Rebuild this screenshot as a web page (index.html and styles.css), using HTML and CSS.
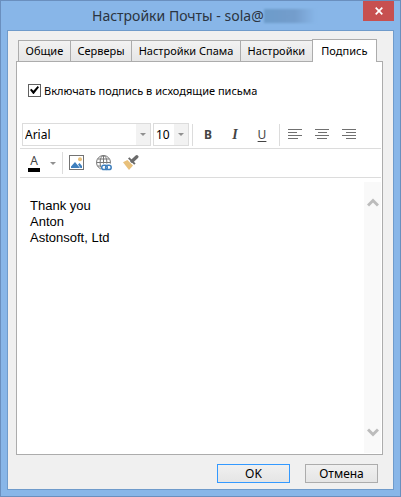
FILE: index.html
```html
<!DOCTYPE html>
<html lang="ru">
    <head>
        <meta charset="utf-8">
        <title>Настройки Почты</title>
        <link rel="stylesheet" href="styles.css">
    </head>
    <body>
        <div class="window">
            <header class="titlebar">
                <h1 class="title">Настройки Почты - sola@<span class="hidden-name"></span></h1>
                <button class="close" aria-label="Закрыть">
                    <svg width="8" height="8" viewBox="0 0 8 8"><path d="M0.7 0.7L7.3 7.3M7.3 0.7L0.7 7.3" stroke="#fff" stroke-width="1.7"/></svg>
                </button>
            </header>
            <main class="client">
                <nav class="tabs">
                    <button class="tab">Общие</button>
                    <button class="tab">Серверы</button>
                    <button class="tab">Настройки Спама</button>
                    <button class="tab">Настройки</button>
                    <button class="tab active">Подпись</button>
                </nav>
                <section class="panel">
                    <div class="option">
                        <input type="checkbox" id="include" checked>
                        <label for="include">Включать подпись в исходящие письма</label>
                    </div>
                    <div class="toolbar">
                        <div class="combo combo-font">
                            <select aria-label="Шрифт"><option>Arial</option></select>
                        </div>
                        <div class="combo combo-size">
                            <select aria-label="Размер"><option>10</option></select>
                        </div>
                        <div class="separator"></div>
                        <div class="group">
                            <button class="tool bold" aria-label="Полужирный">B</button>
                            <button class="tool italic" aria-label="Курсив">I</button>
                            <button class="tool underline" aria-label="Подчеркнутый">U</button>
                        </div>
                        <div class="separator"></div>
                        <div class="group">
                            <button class="tool" aria-label="По левому краю">
                                <svg width="14" height="11" viewBox="0 0 14 11"><path d="M0 .5h14M0 3.5h9M0 6.5h14M0 9.5h10" stroke="#707070"/></svg>
                            </button>
                            <button class="tool" aria-label="По центру">
                                <svg width="14" height="11" viewBox="0 0 14 11"><path d="M0 .5h14M3 3.5h9M0 6.5h14M2 9.5h10" stroke="#707070"/></svg>
                            </button>
                            <button class="tool" aria-label="По правому краю">
                                <svg width="14" height="11" viewBox="0 0 14 11"><path d="M0 .5h14M4 3.5h10M0 6.5h14M4 9.5h10" stroke="#707070"/></svg>
                            </button>
                        </div>
                    </div>
                    <div class="toolbar toolbar-insert">
                        <button class="color" aria-label="Цвет текста"><span class="color-letter">A</span></button>
                        <button class="arrow" aria-label="Выбрать цвет"></button>
                        <div class="separator"></div>
                        <div class="group inserts">
                            <button class="tool" aria-label="Вставить рисунок">
                                <svg width="16" height="16" viewBox="0 0 16 16">
                                    <rect x=".5" y=".5" width="14" height="14" fill="#fff" stroke="#737373"/>
                                    <circle cx="11" cy="4.2" r="2" fill="#e8c07a"/>
                                    <path d="M2 13V11.5L6 7l5 6zM9 9.5l1.5-1.5L13 11v2h-1.5z" fill="#3f7fbd"/>
                                </svg>
                            </button>
                            <button class="tool" aria-label="Вставить ссылку">
                                <svg width="16" height="16" viewBox="0 0 16 16" fill="none">
                                    <g stroke="#777">
                                        <circle cx="7.5" cy="7.5" r="7"/>
                                        <ellipse cx="7.5" cy="7.5" rx="3.4" ry="7"/>
                                        <path d="M7.5 .5v14M.5 7.5h14M1.7 4h11.6M1.7 11h11.6"/>
                                    </g>
                                    <rect x="5" y="8.6" width="11" height="7.4" fill="#fff"/>
                                    <rect x="5.7" y="10.2" width="5.6" height="4.4" rx="2.2" stroke="#3f7fbd" stroke-width="1.5"/>
                                    <rect x="9.6" y="10.2" width="5.6" height="4.4" rx="2.2" stroke="#3f7fbd" stroke-width="1.5"/>
                                </svg>
                            </button>
                            <button class="tool" aria-label="Формат по образцу">
                                <svg width="16" height="16" viewBox="0 0 16 16">
                                    <path d="M0 7.2L4.4 5L10 10.6L6 15z" fill="#e8c07a"/>
                                    <path d="M5 3.6L6.4 2.2L12.6 8.4L11.2 9.8z" fill="#6b6b6b"/>
                                    <path d="M9 6.2L13.8 1.8" stroke="#6b6b6b" stroke-width="3.4" stroke-linecap="round"/>
                                </svg>
                            </button>
                        </div>
                    </div>
                    <div class="editor">
                        <textarea class="signature" aria-label="Подпись">Thank you
Anton
Astonsoft, Ltd</textarea>
                        <div class="scrollbar">
                            <button class="scroll" aria-label="Вверх">
                                <svg width="12" height="10" viewBox="0 0 12 10"><path d="M1 7.5L6 2.5L11 7.5" fill="none" stroke="#bcbcbc" stroke-width="3"/></svg>
                            </button>
                            <button class="scroll" aria-label="Вниз">
                                <svg width="12" height="10" viewBox="0 0 12 10"><path d="M1 2.5L6 7.5L11 2.5" fill="none" stroke="#bcbcbc" stroke-width="3"/></svg>
                            </button>
                        </div>
                    </div>
                </section>
                <footer class="actions">
                    <button class="action default">OK</button>
                    <button class="action">Отмена</button>
                </footer>
            </main>
        </div>
    </body>
</html>
```
FILE: styles.css
```css
*{
    box-sizing: border-box;
}
body{
    margin: 0;
    font-family: "Noto Sans", "Open Sans", sans-serif;
    font-size: 11px;
    color: black;
}
button{
    padding: 0;
    border: none;
    background: none;
    font: inherit;
    color: inherit;
}
svg{
    display: block;
}
.window{
    display: flex;
    flex-direction: column;
    min-height: 100vh;
    padding: 0 6px 6px;
    border: 1px solid #6a8fbe;
    background-color: #88b6e8;
}
.titlebar{
    display: flex;
    align-items: flex-start;
    height: 29px;
    padding-left: 85px;
}
.title{
    display: flex;
    flex: 1;
    align-items: center;
    margin: 0;
    font-size: 14px;
    font-weight: normal;
    line-height: 30px;
    white-space: nowrap;
    color: #2b3440;
}
.hidden-name{
    width: 52px;
    height: 14px;
    background: linear-gradient(to right, #6c9ccb, #749dcc 60%, #88b6e8);
    filter: blur(1px);
}
.close{
    display: flex;
    align-items: center;
    justify-content: center;
    width: 31px;
    height: 20px;
    background-color: #c75050;
}
.client{
    display: flex;
    flex: 1;
    flex-direction: column;
    padding: 8px 10px 6px 8px;
    border: 1px solid #6f9bcb;
    background-color: #f0f0f0;
}
/* tabs */
.tabs{
    display: flex;
    align-items: flex-end;
    padding: 0 6px 0 2px;
}
.tab{
    flex: auto;
    height: 21px;
    margin-right: -1px;
    padding: 0 5px;
    border: 1px solid #acacac;
    border-bottom: none;
    background: linear-gradient(#f2f2f2, #e6e6e6);
    line-height: 20px;
    white-space: nowrap;
}
.tab.active{
    z-index: 1;
    height: 23px;
    margin-bottom: -1px;
    margin-right: 0;
    padding: 0 7px;
    background: white;
}
.panel{
    display: flex;
    flex: 1;
    flex-direction: column;
    padding: 20px 1px 1px 3px;
    border: 1px solid #acacac;
    background-color: white;
}
.option{
    display: flex;
    align-items: center;
    gap: 3px;
    height: 16px;
    margin-bottom: 23px;
    padding-left: 8px;
    white-space: nowrap;
}
.option input{
    appearance: none;
    display: flex;
    align-items: center;
    justify-content: center;
    width: 13px;
    height: 13px;
    margin: 0;
    border: 1px solid #606060;
}
.option input:checked::before{
    content: "";
    width: 9px;
    height: 8px;
    background-color: black;
    clip-path: polygon(0 50%, 15% 35%, 38% 60%, 85% 0, 100% 15%, 42% 100%, 35% 100%);
}
/* toolbars */
.toolbar{
    display: flex;
    align-items: center;
    gap: 2px;
    height: 28px;
    padding: 0 2px;
    border-bottom: 1px solid #dcdcdc;
}
.combo{
    position: relative;
    height: 23px;
    border: 1px solid #dcdcdc;
}
.combo-font{
    width: 129px;
}
.combo-size{
    width: 36px;
}
.combo select{
    appearance: none;
    width: 100%;
    height: 100%;
    padding: 0 0 0 2px;
    border: none;
    background: linear-gradient(#f2f2f2, #f2f2f2) right / 14px 100% no-repeat white;
    font: inherit;
    font-size: 12px;
    color: black;
}
/* drop-down arrow over the select */
.combo::after{
    content: "";
    position: absolute;
    top: 9px;
    right: 4px;
    border: 3px solid transparent;
    border-top-color: #909090;
    border-bottom: none;
    pointer-events: none;
}
.separator{
    width: 1px;
    height: 22px;
    margin: 0 1px;
    background-color: #dcdcdc;
}
.group{
    display: flex;
    gap: 5px;
    padding: 0 3px 0 1px;
}
.tool{
    display: flex;
    align-items: center;
    justify-content: center;
    width: 22px;
    height: 22px;
    font-size: 12px;
    color: #444;
}
.bold{
    font-weight: bold;
}
.italic{
    font-family: "Liberation Serif", serif;
    font-size: 14px;
    font-style: italic;
    font-weight: bold;
}
.underline{
    text-decoration: underline;
    text-underline-offset: 2px;
}
.toolbar-insert{
    height: 29px;
    gap: 6px;
}
.color{
    width: 22px;
    padding: 0 4px 0 6px;
    font-size: 12px;
}
.color-letter{
    display: block;
    border-bottom: 4px solid black;
    line-height: 14px;
    color: #444;
}
.arrow{
    border: 3px solid transparent;
    border-top-color: #909090;
    border-bottom: none;
}
.toolbar-insert .separator{
    margin: 0;
}
.inserts{
    padding: 0;
}
.inserts .tool{
    margin-left: -3px;
    margin-right: 3px;
}
/* signature text */
.editor{
    display: flex;
    flex: 1;
    padding-top: 4px;
}
.signature{
    flex: 1;
    min-width: 0;
    padding: 16px 10px;
    border: none;
    outline: none;
    resize: none;
    overflow: hidden;
    font-family: "Liberation Sans", Arial, sans-serif;
    font-size: 13px;
    line-height: 16px;
    color: black;
}
.scrollbar{
    display: flex;
    flex-direction: column;
    justify-content: space-between;
    width: 17px;
    padding: 16px 0;
    background-color: #f9f9f9;
}
.scroll{
    display: flex;
    justify-content: center;
}
.actions{
    display: flex;
    justify-content: flex-end;
    gap: 15px;
    padding: 9px 5px 0 0;
}
.action{
    width: 73px;
    height: 19px;
    border: 1px solid #acacac;
    background: linear-gradient(#f0f0f0, #e5e5e5);
    font-size: 12px;
    line-height: 17px;
}
.default{
    border-color: #3399ff;
}
```
